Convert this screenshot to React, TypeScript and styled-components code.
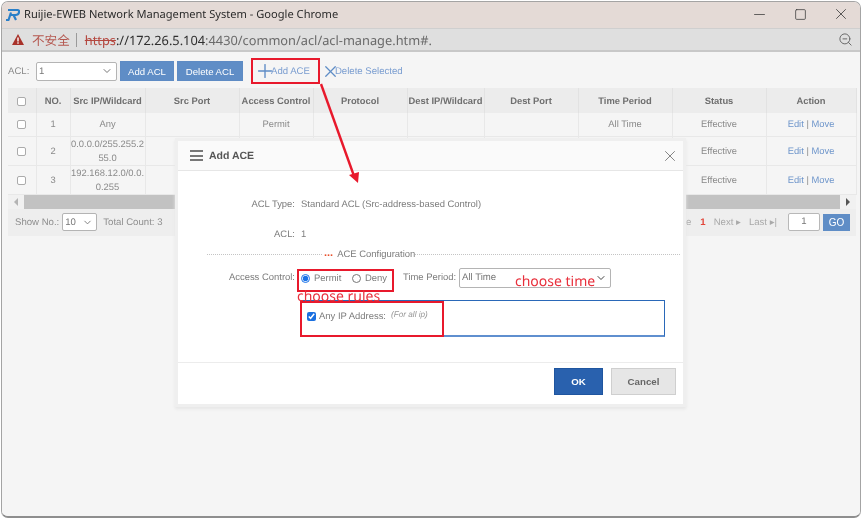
import React from "react";
import styled, { createGlobalStyle } from "styled-components";
import { ChevronDown, Minus, Plus, Square, X, ZoomOut } from "lucide-react";

const Global = createGlobalStyle`
  html, body { margin: 0; padding: 0; background: #fff; }
  body { font-family: "Liberation Sans", Arial, sans-serif; text-rendering: geometricPrecision; }
  * { box-sizing: border-box; }
`;

const Desktop = styled.div`
  position: relative;
  width: 863px;
  height: 519px;
  overflow: hidden;
  background: #fff;
  filter: blur(0.25px);
`;
const Win = styled.div`
  width: 860px;
  height: 517px;
  margin: 1px 0 0 1px;
  border: 1px solid #a4a4a4;
  border-bottom: 2px solid #8e8e8e;
  border-radius: 7px;
  overflow: hidden;
  display: flex;
  flex-direction: column;
  background: #f5f5f5;
`;
const TitleBar = styled.div`
  height: 26px;
  background: #e4dad6;
  display: flex;
  align-items: center;
  padding: 0 0 2px 3px;
  color: #2b2b2b;
  font: 11.1px "Noto Sans", "Open Sans", sans-serif;
`;
const TitleText = styled.span`
  margin-left: 4px;
  flex: 1;
`;
const WinButtons = styled.div`
  display: flex;
  align-items: center;
  gap: 19px;
  padding-right: 8px;
  color: #3c3c3c;
`;
const WinButton = styled.span`
  width: 22px;
  display: flex;
  justify-content: center;
`;
const AddressBar = styled.div`
  height: 24px;
  background: #dfdfdf;
  border-top: 1px solid #cfcfcf;
  border-bottom: 2px solid #c8c8c8;
  display: flex;
  align-items: center;
  padding-left: 10px;
  padding-right: 7px;
  font: 12.8px "Noto Sans", "Open Sans", sans-serif;
  color: #6a6a6a;
`;
const NotSecure = styled.span`
  color: #b4574f;
  font: 12.6px "Noto Sans CJK SC", sans-serif;
  margin-left: 8px;
`;
const Sep = styled.span`
  width: 1px;
  height: 14px;
  background: #9a9a9a;
  margin: 0 8px 0 6px;
`;
const Https = styled.span`
  color: #b4473f;
  text-decoration: line-through;
  text-decoration-thickness: 1px;
`;
const Host = styled.span`
  color: #2f2f2f;
`;
const Url = styled.div`
  flex: 1;
`;
const Content = styled.div`
  flex: 1;
  padding: 9px 0 0 6px;
  background: #f5f5f5;
  color: #8a8a8a;
  font-size: 9.6px;
`;
const Toolbar = styled.div`
  height: 20px;
  display: flex;
  align-items: center;
`;
const ToolLabel = styled.span`
  width: 28px;
  color: #8a8a8a;
`;
const SelectBox = styled.div<{ $w: number; $h?: number }>`
  width: ${(p) => p.$w}px;
  height: ${(p) => p.$h ?? 19}px;
  background: #fff;
  border: 1px solid #b4b4b4;
  border-radius: 2px;
  display: flex;
  align-items: center;
  justify-content: space-between;
  padding: 0 3px 0 2px;
  color: #777;
  font-size: 9.6px;
  flex: none;
`;
const BlueButton = styled.button<{ $w: number; $ml: number }>`
  width: ${(p) => p.$w}px;
  height: 20px;
  margin-left: ${(p) => p.$ml}px;
  padding: 0;
  border: 1px solid #5e8bc4;
  background: #5f8dc6;
  color: #fff;
  font: 9.6px "Liberation Sans", sans-serif;
`;
const LinkAction = styled.span<{ $ml: number }>`
  margin-left: ${(p) => p.$ml}px;
  display: inline-flex;
  align-items: center;
  color: #7a9dd0;
`;
const TableWrap = styled.div`
  width: 848px;
  margin-top: 7px;
`;
const Table = styled.table`
  width: 848px;
  table-layout: fixed;
  border-collapse: collapse;
  font-size: 9.4px;
`;
const Th = styled.th`
  height: 25px;
  padding: 0;
  background: #ececec;
  color: #6f6f6f;
  font-weight: bold;
  text-align: center;
  border-right: 1px solid #e2e2e2;
  white-space: nowrap;
`;
const Td = styled.td`
  padding: 0;
  text-align: center;
  color: #8a8a8a;
  line-height: 14px;
  border-right: 1px solid #e8e8e8;
  border-bottom: 1px solid #e8e8e8;
  word-break: break-all;
`;
const Row = styled.tr<{ $h: number }>`
  height: ${(p) => p.$h}px;
`;
const TinyCheck = styled.span`
  display: inline-block;
  width: 9px;
  height: 9px;
  border: 1px solid #ababab;
  border-radius: 2px;
  background: #fff;
  vertical-align: middle;
`;
const Anchor = styled.span`
  color: #6f96cb;
`;
const ScrollBar = styled.div`
  height: 14px;
  background: #f1f1f1;
  display: flex;
  align-items: center;
`;
const ScrollArrow = styled.span<{ $dir: "l" | "r" }>`
  width: 16px;
  display: flex;
  justify-content: center;
  &::before {
    content: "";
    border-top: 4px solid transparent;
    border-bottom: 4px solid transparent;
    ${(p) =>
      p.$dir === "l" ? "border-right: 4px solid #b4b4b4;" : "border-left: 4px solid #555;"}
  }
`;
const ScrollThumb = styled.div`
  flex: 1;
  height: 14px;
  background: #c2c2c2;
`;
const Pager = styled.div`
  height: 27px;
  background: #eeeeee;
  display: flex;
  align-items: center;
  padding: 0 6px 0 7px;
  color: #8e8e8e;
  white-space: nowrap;
`;
const PagerGap = styled.span<{ $w: number }>`
  width: ${(p) => p.$w}px;
  flex: none;
`;
const PagerSpring = styled.span`
  flex: 1;
`;
const Current = styled.span`
  color: #e2463a;
  font-weight: bold;
`;
const Dim = styled.span`
  color: #a9a9a9;
  display: inline-flex;
  align-items: center;
  gap: 4px;
`;
const PageInput = styled.div`
  width: 32px;
  height: 18px;
  border: 1px solid #b8b8b8;
  background: #fff;
  color: #777;
  text-align: center;
  line-height: 16px;
  border-radius: 2px;
`;
const Go = styled.button`
  width: 27px;
  height: 17px;
  margin-left: 3px;
  padding: 0;
  border: none;
  background: #5f8dc6;
  color: #fff;
  font: 10px "Liberation Sans", sans-serif;
`;

const Modal = styled.div`
  position: absolute;
  left: 178px;
  top: 141px;
  width: 505px;
  height: 263px;
  background: #fff;
  box-shadow: 0 0 0 3px #efefef, 0 2px 3px 3px #e6e6e6;
  display: flex;
  flex-direction: column;
  color: #7c7c7c;
  font-size: 9.45px;
`;
const ModalHead = styled.div`
  height: 30px;
  background: #fafafa;
  border-bottom: 1px solid #e6e6e6;
  display: flex;
  align-items: center;
  padding: 0 4px 0 12px;
`;
const ModalTitle = styled.span`
  flex: 1;
  margin-left: 6px;
  color: #555;
  font-weight: bold;
  font-size: 10.5px;
`;
const Bars = styled.span`
  width: 13px;
  height: 11px;
  border-top: 2px solid #777;
  border-bottom: 2px solid #777;
  position: relative;
  &::after {
    content: "";
    position: absolute;
    left: 0;
    right: 0;
    top: 2.5px;
    height: 2px;
    background: #777;
  }
`;
const ModalBody = styled.div`
  flex: 1;
  padding-top: 26px;
  display: flex;
  flex-direction: column;
`;
const FormRow = styled.div<{ $mt?: number }>`
  display: flex;
  align-items: center;
  min-height: 14px;
  margin-top: ${(p) => p.$mt ?? 0}px;
`;
const Label = styled.span`
  width: 117px;
  text-align: right;
  margin-right: 6px;
  flex: none;
`;
const Divider = styled.div`
  display: flex;
  align-items: center;
  margin: 7px 3px 0 29px;
  height: 12px;
`;
const Dotted = styled.span<{ $w?: number }>`
  ${(p) => (p.$w ? `width: ${p.$w}px;` : "flex: 1;")}
  border-top: 1px dotted #c4c4c4;
`;
const Dots = styled.span`
  color: #e8502c;
  font-weight: bold;
  font-size: 11px;
  margin: -3px 4px 0 2px;
`;
const ChoiceRow = styled.div`
  display: flex;
  align-items: center;
  margin-top: 7px;
  height: 21px;
`;
const Radio = styled.input.attrs({ type: "radio" })`
  width: 9px;
  height: 9px;
  margin: 1px 4px 0 0;
  accent-color: #1a73e8;
  flex: none;
`;
const RadioText = styled.span<{ $w: number }>`
  width: ${(p) => p.$w}px;
  flex: none;
  margin-top: 1px;
`;
const TimeLabel = styled.span`
  width: 55px;
  flex: none;
  margin-right: 1px;
`;
const AnyBox = styled.div`
  width: 364px;
  height: 37px;
  margin: 12px 0 0 123px;
  border: 1px solid #2a68b8;
  border-bottom: 2px solid #5f8fcf;
  display: flex;
  align-items: center;
  padding: 0 0 4px 5px;
`;
const Check = styled.input.attrs({ type: "checkbox" })`
  width: 9px;
  height: 9px;
  margin: 0 3px 0 0;
  accent-color: #1a6fe0;
`;
const Hint = styled.em`
  margin: -3px 0 0 5px;
  font-size: 8.2px;
  color: #999;
`;
const ModalFoot = styled.div`
  height: 42px;
  border-top: 1px solid #ececec;
  display: flex;
  justify-content: flex-end;
  align-items: center;
  gap: 8px;
  padding: 0 7px 4px 0;
`;
const Ok = styled.button`
  width: 49px;
  height: 27px;
  padding: 0;
  background: #2961ae;
  border: 1px solid #1f559f;
  color: #fff;
  font: bold 9.7px "Liberation Sans", sans-serif;
`;
const Cancel = styled.button`
  width: 65px;
  height: 27px;
  padding: 0;
  background: #e6e6e6;
  border: 1px solid #cfcfcf;
  color: #666;
  font: bold 9.7px "Liberation Sans", sans-serif;
`;

const RedBox = styled.div<{ $x: number; $y: number; $w: number; $h: number }>`
  position: absolute;
  left: ${(p) => p.$x}px;
  top: ${(p) => p.$y}px;
  width: ${(p) => p.$w}px;
  height: ${(p) => p.$h}px;
  border: 2px solid #e8192c;
`;
const RedNote = styled.span<{ $x: number; $y: number }>`
  position: absolute;
  left: ${(p) => p.$x}px;
  top: ${(p) => p.$y}px;
  color: #e8303c;
  font: 14px/16px "Noto Sans", "Open Sans", sans-serif;
  white-space: nowrap;
`;
const ArrowLayer = styled.svg`
  position: absolute;
  left: 0;
  top: 0;
  pointer-events: none;
`;
const PlusIcon = styled(Plus)`
  margin: -4px -5px -4px -2px;
  color: #5f8dc6;
`;
const CrossIcon = styled(X)`
  margin: -4px -5px -4px -3px;
  color: #5f8dc6;
`;

const Logo = () => (
  <svg width="15" height="13" viewBox="0 0 15 13" fill="none">
    <path
      d="M3 2 H12.5 Q14.5 2 14 4.5 Q13.5 6.8 10.5 7 H6 M8.5 7 L11 12 M6 4.5 L3.5 12 H1"
      stroke="#2a7fc8"
      strokeWidth="2.2"
      strokeLinejoin="round"
    />
  </svg>
);
const Warn = () => (
  <svg width="12" height="11" viewBox="0 0 12 11">
    <path d="M6 0 L12 11 H0 Z" fill="#a8322a" />
    <rect x="5.3" y="3.5" width="1.4" height="4" fill="#fff" />
    <rect x="5.3" y="8.3" width="1.4" height="1.4" fill="#fff" />
  </svg>
);

const cols = [28, 34, 75, 94, 74, 94, 77, 94, 94, 94, 90];
const heads = ["", "NO.", "Src IP/Wildcard", "Src Port", "Access Control", "Protocol", "Dest IP/Wildcard", "Dest Port", "Time Period", "Status", "Action"];
const rows = [
  { no: "1", ip: "Any", h: 23 },
  { no: "2", ip: "0.0.0.0/255.255.255.0", h: 29 },
  { no: "3", ip: "192.168.12.0/0.0.0.255", h: 29 },
];

export default function App() {
  return (
    <Desktop>
      <Global />
      <Win>
        <TitleBar>
          <Logo />
          <TitleText>Ruijie-EWEB Network Management System - Google Chrome</TitleText>
          <WinButtons>
            <WinButton><Minus size={17} strokeWidth={1.1} /></WinButton>
            <WinButton><Square size={13} strokeWidth={1.4} /></WinButton>
            <WinButton><X size={18} strokeWidth={1.1} /></WinButton>
          </WinButtons>
        </TitleBar>
        <AddressBar>
          <Warn />
          <NotSecure>不安全</NotSecure>
          <Sep />
          <Url>
            <Https>https</Https>
            <Host>://172.26.5.104</Host>:4430/common/acl/acl-manage.htm#.
          </Url>
          <ZoomOut size={15} strokeWidth={1.6} />
        </AddressBar>
        <Content>
          <Toolbar>
            <ToolLabel>ACL:</ToolLabel>
            <SelectBox $w={81}>
              1<ChevronDown size={12} />
            </SelectBox>
            <BlueButton $w={54} $ml={3}>Add ACL</BlueButton>
            <BlueButton $w={66} $ml={3}>Delete ACL</BlueButton>
            <LinkAction $ml={13}>
              <PlusIcon size={22} strokeWidth={1.5} />
              Add ACE
            </LinkAction>
            <LinkAction $ml={14}>
              <CrossIcon size={19} strokeWidth={1.6} />
              Delete Selected
            </LinkAction>
          </Toolbar>
          <TableWrap>
            <Table>
              <colgroup>
                {cols.map((w, i) => (
                  <col key={i} width={w} />
                ))}
              </colgroup>
              <thead>
                <tr>
                  {heads.map((h, i) => (
                    <Th key={i}>{i === 0 ? <TinyCheck /> : h}</Th>
                  ))}
                </tr>
              </thead>
              <tbody>
                {rows.map((r) => (
                  <Row key={r.no} $h={r.h}>
                    <Td><TinyCheck /></Td>
                    <Td>{r.no}</Td>
                    <Td>{r.ip}</Td>
                    <Td />
                    <Td>Permit</Td>
                    <Td />
                    <Td />
                    <Td />
                    <Td>All Time</Td>
                    <Td>Effective</Td>
                    <Td>
                      <Anchor>Edit</Anchor> | <Anchor>Move</Anchor>
                    </Td>
                  </Row>
                ))}
              </tbody>
            </Table>
            <ScrollBar>
              <ScrollArrow $dir="l" />
              <ScrollThumb />
              <ScrollArrow $dir="r" />
            </ScrollBar>
            <Pager>
              Show No.:
              <PagerGap $w={3} />
              <SelectBox $w={35} $h={18}>
                10<ChevronDown size={11} />
              </SelectBox>
              <PagerGap $w={6} />
              Total Count: 3
              <PagerSpring />
              <Dim>re</Dim>
              <PagerGap $w={9} />
              <Current>1</Current>
              <PagerGap $w={8} />
              <Dim>Next ▸</Dim>
              <PagerGap $w={8} />
              <Dim>Last ▸|</Dim>
              <PagerGap $w={11} />
              <PageInput>1</PageInput>
              <Go>GO</Go>
            </Pager>
          </TableWrap>
        </Content>
      </Win>

      <Modal>
        <ModalHead>
          <Bars />
          <ModalTitle>Add ACE</ModalTitle>
          <X size={18} strokeWidth={1.2} color="#777" />
        </ModalHead>
        <ModalBody>
          <FormRow>
            <Label>ACL Type:</Label>
            Standard ACL (Src-address-based Control)
          </FormRow>
          <FormRow $mt={16}>
            <Label>ACL:</Label>1
          </FormRow>
          <Divider>
            <Dotted $w={115} />
            <Dots>...</Dots>
            ACE Configuration
            <Dotted />
          </Divider>
          <ChoiceRow>
            <Label>Access Control:</Label>
            <Radio name="ac" defaultChecked />
            <RadioText $w={38}>Permit</RadioText>
            <Radio name="ac" />
            <RadioText $w={38}>Deny</RadioText>
            <TimeLabel>Time Period:</TimeLabel>
            <SelectBox $w={152} $h={20}>
              All Time
              <ChevronDown size={12} color="#444" />
            </SelectBox>
          </ChoiceRow>
          <AnyBox>
            <Check defaultChecked />
            Any IP Address:
            <Hint>(For all ip)</Hint>
          </AnyBox>
        </ModalBody>
        <ModalFoot>
          <Ok>OK</Ok>
          <Cancel>Cancel</Cancel>
        </ModalFoot>
      </Modal>

      <RedBox $x={251} $y={58} $w={69} $h={26} />
      <RedBox $x={297} $y={269} $w={97} $h={23} />
      <RedBox $x={300} $y={301} $w={144} $h={36} />
      <RedNote $x={515} $y={274}>choose time</RedNote>
      <RedNote $x={297} $y={289}>choose rules</RedNote>
      <ArrowLayer width="863" height="519" viewBox="0 0 863 519">
        <path d="M321 84 L354 176" stroke="#e8192c" strokeWidth="2.4" fill="none" />
        <path d="M358 183 L349 175 L359 172 Z" fill="#e8192c" />
      </ArrowLayer>
    </Desktop>
  );
}
